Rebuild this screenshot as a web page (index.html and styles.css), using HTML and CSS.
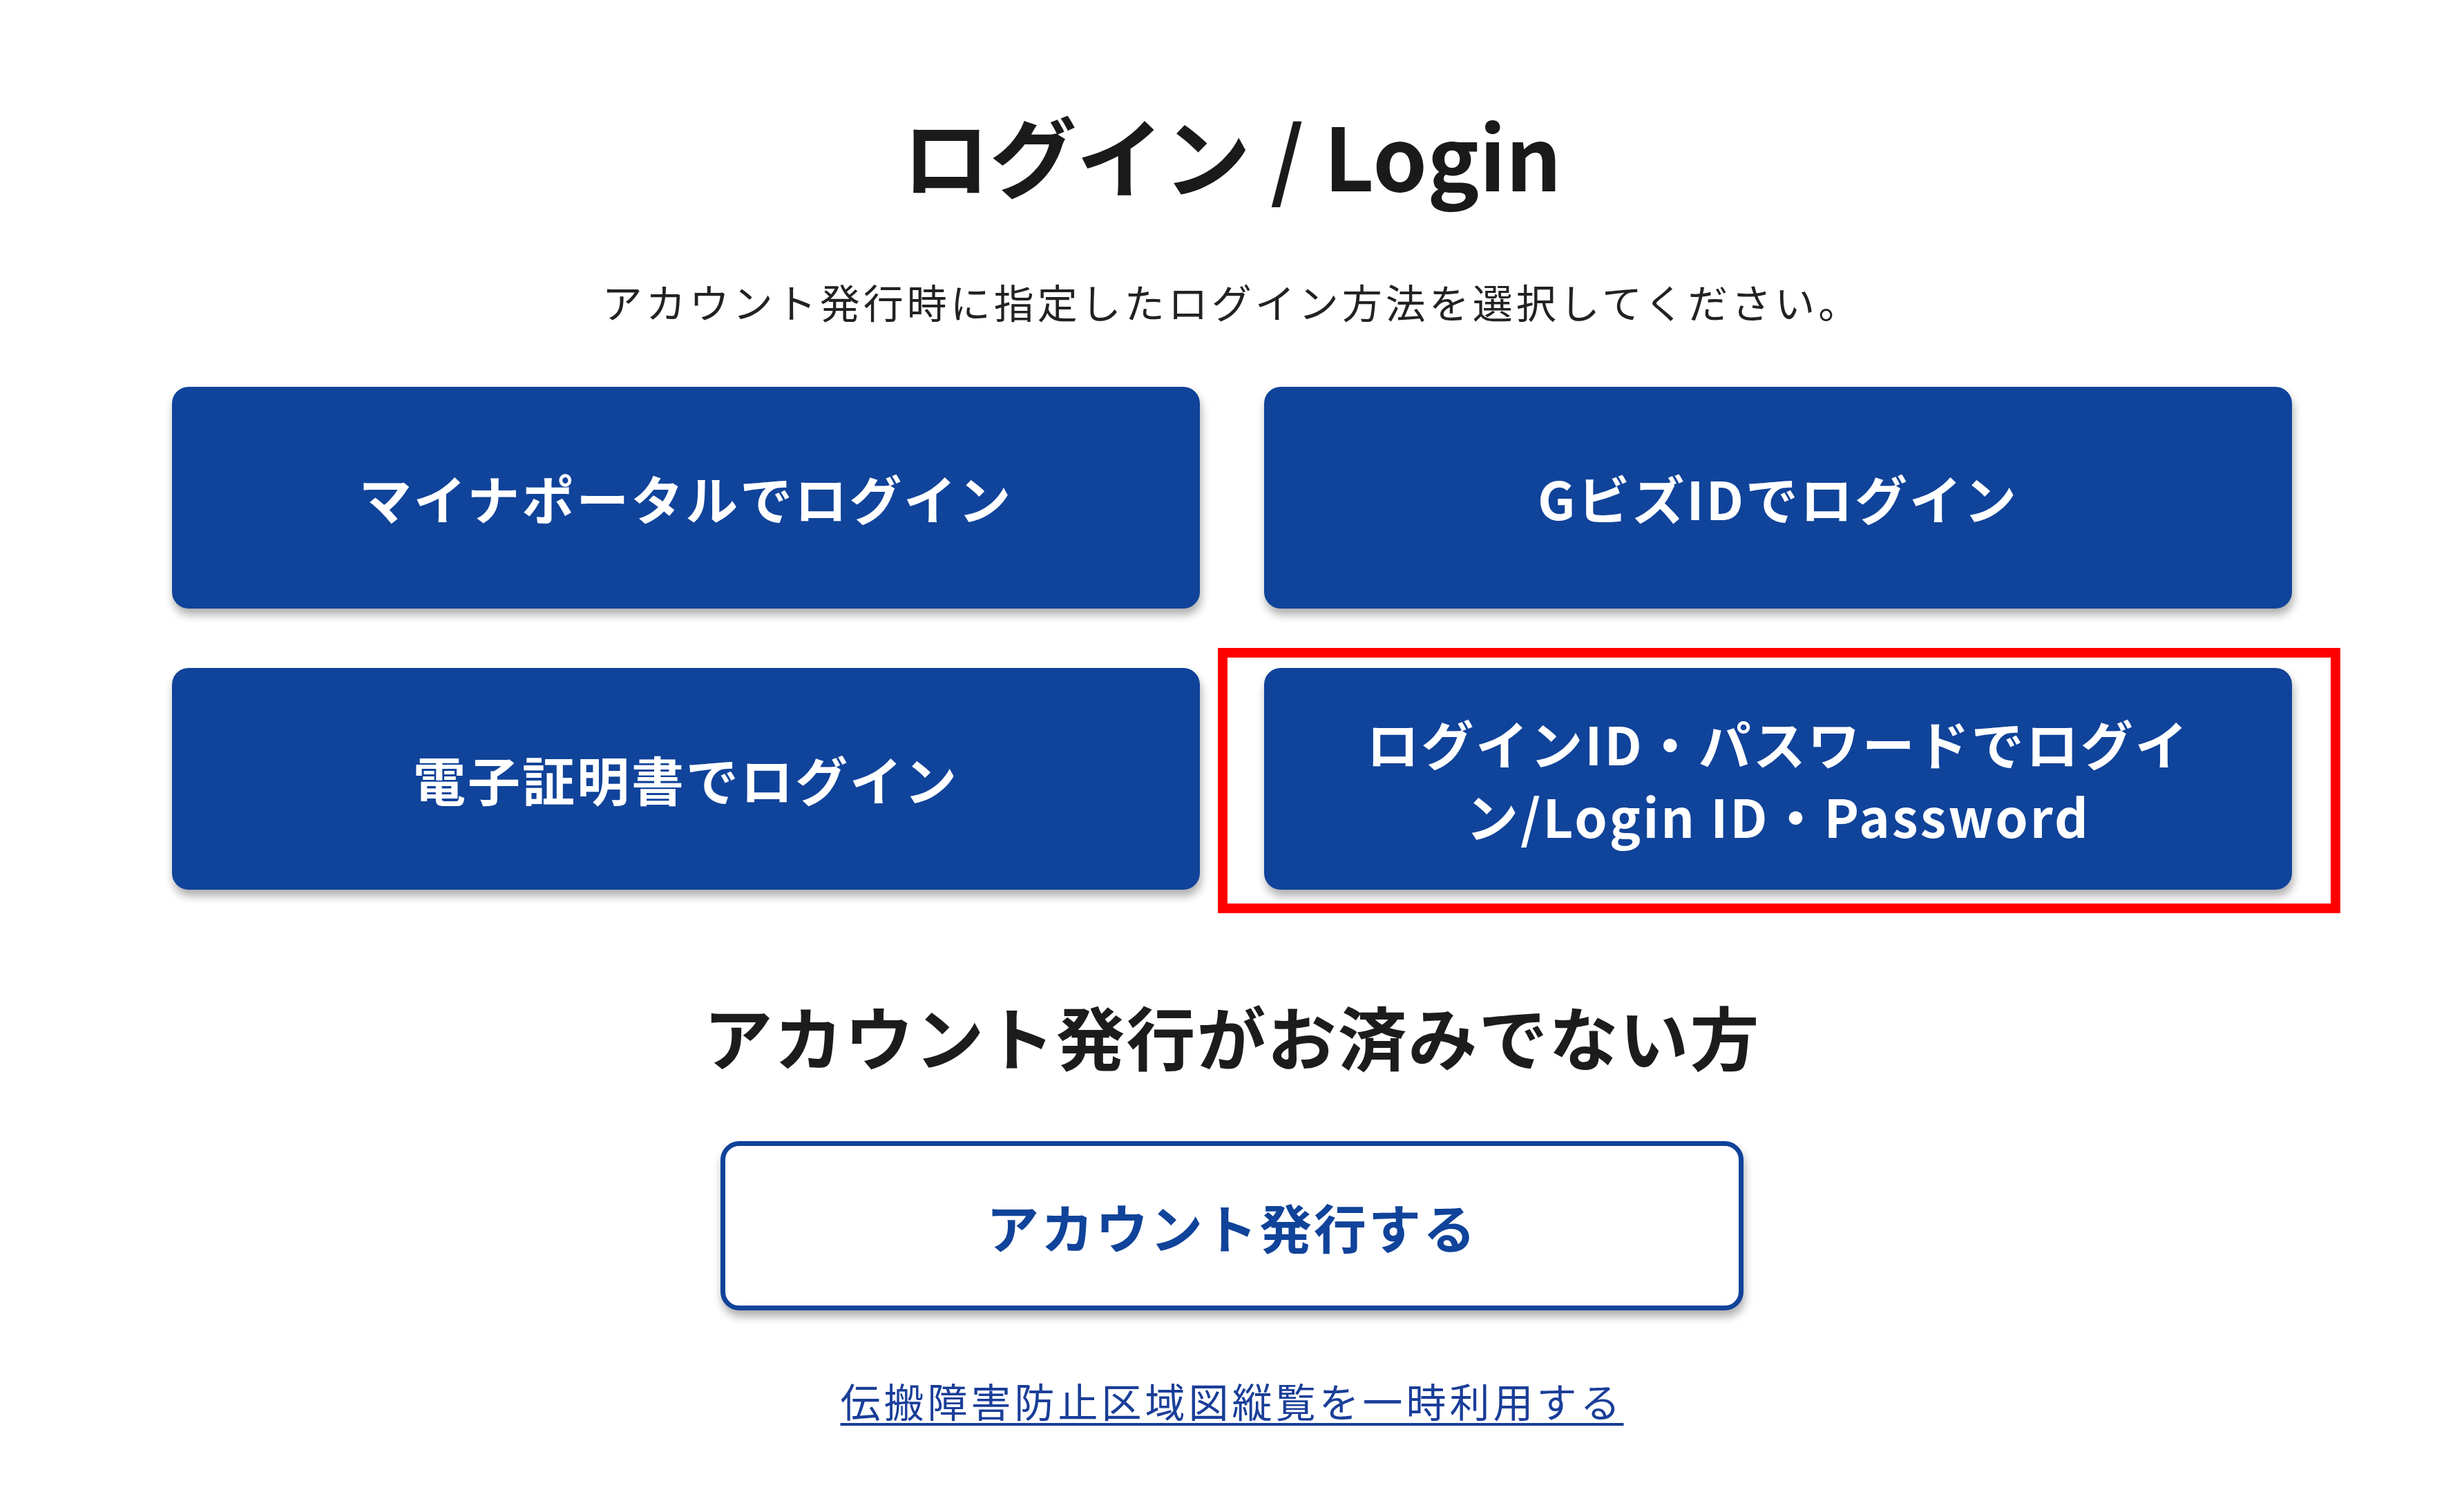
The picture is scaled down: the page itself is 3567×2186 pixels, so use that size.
FILE: index.html
```html
<!DOCTYPE html>
<html lang="ja">
<head>
   <meta charset="utf-8"/>
   <meta name="viewport" content="width=device-width, initial-scale=1" />
   <link rel="stylesheet" href="styles.css">
</head>
<body>
<!--login page-->
<main class="login">
   <h1 class="login-title">ログイン / Login</h1>
   <p class="login-lead">アカウント発行時に指定したログイン方法を選択してください。</p>

   <!--login buttons-->
   <div class="login-grid">
      <a class="btn-login" href="#">マイナポータルでログイン</a>
      <a class="btn-login" href="#">GビズIDでログイン</a>
      <a class="btn-login" href="#">電子証明書でログイン</a>
      <a class="btn-login btn-marked" href="#">ログインID・パスワードでログイン/Login ID・Password<span class="mark"></span></a>
   </div>

   <h2 class="sub-title">アカウント発行がお済みでない方</h2>
   <a class="btn-outline" href="#">アカウント発行する</a>

   <a class="temp-link" href="#">伝搬障害防止区域図縦覧を一時利用する</a>
</main>
</body>
</html>
```

FILE: styles.css
```css
/* base */
body {
   margin: 0;
   background: #ffffff;
   font-family: "Noto Sans CJK JP", "Noto Sans", sans-serif;
   color: #1c1c1c;
}

.login {
   width: 3069px;
   margin: 0 auto;
   padding-top: 145px;
   display: flex;
   flex-direction: column;
   align-items: center;
}

.login-title {
   margin: 0;
   font-size: 126px;
   line-height: 154px;
   font-weight: 700;
   color: #1a1a1a;
}

.login-lead {
   margin: 97px 0 0;
   font-size: 58px;
   line-height: 80px;
   letter-spacing: 5px;
   color: #222222;
}

/* blue buttons */
.login-grid {
   margin-top: 84px;
   width: 100%;
   display: grid;
   grid-template-columns: 1fr 1fr;
   column-gap: 93px;
   row-gap: 86px;
}

.btn-login {
   position: relative;
   height: 321px;
   padding: 0 130px;
   box-sizing: border-box;
   display: flex;
   align-items: center;
   justify-content: center;
   text-align: center;
   background: #10439a;
   color: #ffffff;
   border-radius: 24px;
   box-shadow: 2px 9px 13px rgba(0, 0, 0, 0.32);
   font-size: 76px;
   font-weight: 700;
   line-height: 105px;
   letter-spacing: 3px;
   text-decoration: none;
}

/* red annotation frame */
.mark {
   position: absolute;
   left: -67px;
   top: -29px;
   right: -70px;
   bottom: -34px;
   border: 14px solid #ff0000;
   pointer-events: none;
}

.sub-title {
   margin: 141px 0 0;
   font-size: 100px;
   line-height: 140px;
   letter-spacing: 2px;
   font-weight: 700;
   color: #1c1c1c;
}

.btn-outline {
   margin-top: 83px;
   width: 1481px;
   height: 245px;
   box-sizing: border-box;
   display: flex;
   align-items: center;
   justify-content: center;
   border: 7px solid #10439a;
   border-radius: 27px;
   background: #ffffff;
   box-shadow: 2px 9px 13px rgba(0, 0, 0, 0.32);
   color: #10439a;
   font-size: 76px;
   font-weight: 700;
   letter-spacing: 3px;
   text-decoration: none;
}

.temp-link {
   margin-top: 90px;
   font-size: 58px;
   line-height: 80px;
   letter-spacing: 5px;
   color: #1a3e98;
   text-decoration: underline;
   text-decoration-thickness: 4px;
   text-underline-offset: 8px;
}
```
